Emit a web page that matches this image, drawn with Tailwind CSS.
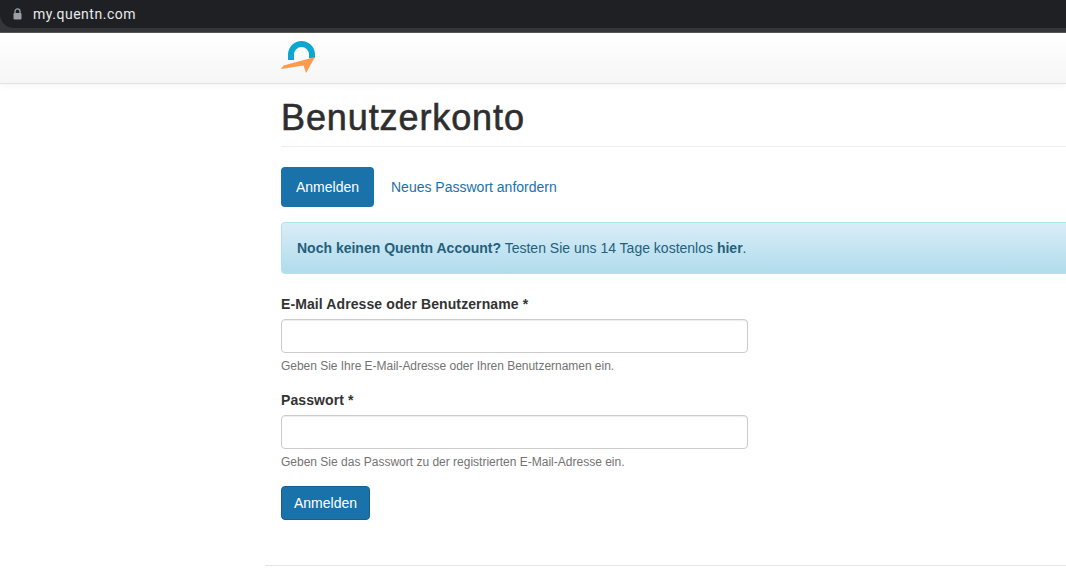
<!DOCTYPE html>
<html lang="de">
<head>
    <meta charset="UTF-8">
    <meta name="viewport" content="width=device-width, initial-scale=1.0">
    <title>Benutzerkonto</title>
    <script src="https://cdn.jsdelivr.net/npm/@tailwindcss/browser@4"></script>
</head>
<body class="bg-white font-['Liberation_Sans',Arial,sans-serif] text-[#333] h-[588px] overflow-hidden">
    <!-- Browser Leiste -->
    <div class="bg-[#35363a] h-[33px] border-b border-[#55565a]">
        <div class="bg-[#1f2023] h-[28px] rounded-bl-[14px] flex items-center pl-[13px]">
            <svg class="w-[9px] h-[12px] mb-[1px] text-[#9aa0a6]" viewBox="0 0 9 12" fill="none">
                <path d="M2 5.2V3.4a2.500 2.500 0 0 1 5 0v1.800" stroke="currentColor" stroke-width="1.3"/>
                <rect x="0.5" y="5" width="8" height="6.500" rx="1" fill="currentColor"/>
            </svg>
            <span class="ml-[11px] text-[14px] text-[#e8eaed] font-['Roboto',sans-serif] tracking-[0.52px]">my.quentn.com</span>
        </div>
    </div>

    <!-- Navbar -->
    <nav class="h-[51px] bg-gradient-to-b from-white to-[#f6f6f6] border-b border-[#e1e1e1] shadow-[0_2px_6px_rgba(0,0,0,0.04)] pl-[281px] pt-[8px]">
        <svg class="w-[35px] h-[32px]" viewBox="0 0 35 32">
            <path d="M10 19V13.500A10.500 10.500 0 0 1 31 13.500V17" fill="none" stroke="#0ba7d0" stroke-width="6"/>
            <path d="M0 28L2.500 24.500L34 16L25 32L22.500 24.500z" fill="#fd9a4e"/>
        </svg>
    </nav>

    <div class="pl-[281px] w-[1100px]">
        <h1 class="text-[36px] leading-[40px] font-normal mt-[14px] pb-[8px] border-b border-[#eee] text-[#2e2e2e] tracking-[0.9px] [-webkit-text-stroke:0.6px_#2e2e2e]">Benutzerkonto</h1>

        <!-- Tabs -->
        <div class="flex items-center mt-[20px] text-[14px]">
            <a class="w-[93px] h-[40px] flex items-center justify-center rounded-[4px] bg-[#1a72ab] text-white">Anmelden</a>
            <a class="ml-[17px] text-[#1a72ab]">Neues Passwort anfordern</a>
        </div>

        <!-- Hinweis -->
        <div class="mt-[15px] h-[52px] flex items-center pl-[15px] text-[14px] text-[#245f7c] bg-gradient-to-b from-[#d9edf7] to-[#b0dcec] border border-[#ace3ee] rounded-l-[4px]">
            <p><b>Noch keinen Quentn Account?</b> Testen Sie uns 14 Tage kostenlos <b>hier</b>.</p>
        </div>

        <!-- Formular -->
        <form class="w-[467px]">
            <label class="block mt-[20px] text-[14px] leading-[20px] font-bold tracking-[0.1px]">E-Mail Adresse oder Benutzername *</label>
            <input type="text" class="block mt-[5px] w-full h-[34px] rounded-[4px] border border-[#ccc] bg-white shadow-[inset_0_1px_1px_rgba(0,0,0,0.075)]">
            <p class="mt-[5px] text-[12px] leading-[17px] text-[#737373] whitespace-nowrap tracking-[-0.03px]">Geben Sie Ihre E-Mail-Adresse oder Ihren Benutzernamen ein.</p>

            <label class="block mt-[15px] text-[14px] leading-[20px] font-bold tracking-[0.1px]">Passwort *</label>
            <input type="password" class="block mt-[5px] w-full h-[34px] rounded-[4px] border border-[#ccc] bg-white shadow-[inset_0_1px_1px_rgba(0,0,0,0.075)]">
            <p class="mt-[5px] text-[12px] leading-[17px] text-[#737373] whitespace-nowrap">Geben Sie das Passwort zu der registrierten E-Mail-Adresse ein.</p>

            <button type="button" class="block mt-[15px] w-[89px] h-[34px] rounded-[4px] bg-[#1a72ab] border border-[#175f8e] text-white text-[14px]">Anmelden</button>
        </form>
    </div>

    <!-- Footer Linie -->
    <div class="ml-[265px] mt-[45px] border-t border-[#e4e4e4]"></div>
</body>
</html>
